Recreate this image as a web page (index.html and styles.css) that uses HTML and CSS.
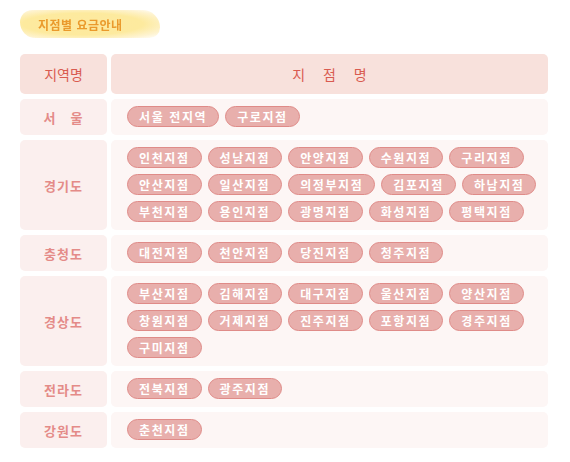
FILE: index.html
```html
<!DOCTYPE html>
<html lang="ko">

<head>
    <meta charset="UTF-8">
    <title>지점별 요금안내</title>
    <link rel="stylesheet" href="styles.css">
</head>

<body>
    <h1 class="page-title"><span>지점별 요금안내</span></h1>

    <div class="branch-table">
        <div class="head-cell area">지역명</div>
        <div class="head-cell name">지 점 명</div>

        <div class="area-cell">서 &nbsp; 울</div>
        <div class="branch-cell">
            <a class="pill">서울 전지역</a>
            <a class="pill">구로지점</a>
        </div>

        <div class="area-cell">경기도</div>
        <div class="branch-cell">
            <a class="pill">인천지점</a>
            <a class="pill">성남지점</a>
            <a class="pill">안양지점</a>
            <a class="pill">수원지점</a>
            <a class="pill">구리지점</a>
            <a class="pill">안산지점</a>
            <a class="pill">일산지점</a>
            <a class="pill">의정부지점</a>
            <a class="pill">김포지점</a>
            <a class="pill">하남지점</a>
            <a class="pill">부천지점</a>
            <a class="pill">용인지점</a>
            <a class="pill">광명지점</a>
            <a class="pill">화성지점</a>
            <a class="pill">평택지점</a>
        </div>

        <div class="area-cell">충청도</div>
        <div class="branch-cell">
            <a class="pill">대전지점</a>
            <a class="pill">천안지점</a>
            <a class="pill">당진지점</a>
            <a class="pill">청주지점</a>
        </div>

        <div class="area-cell">경상도</div>
        <div class="branch-cell">
            <a class="pill">부산지점</a>
            <a class="pill">김해지점</a>
            <a class="pill">대구지점</a>
            <a class="pill">울산지점</a>
            <a class="pill">양산지점</a>
            <a class="pill">창원지점</a>
            <a class="pill">거제지점</a>
            <a class="pill">진주지점</a>
            <a class="pill">포항지점</a>
            <a class="pill">경주지점</a>
            <a class="pill">구미지점</a>
        </div>

        <div class="area-cell">전라도</div>
        <div class="branch-cell">
            <a class="pill">전북지점</a>
            <a class="pill">광주지점</a>
        </div>

        <div class="area-cell">강원도</div>
        <div class="branch-cell">
            <a class="pill">춘천지점</a>
        </div>
    </div>
</body>

</html>
```

FILE: styles.css
```css
body {
    font-family: "Noto Sans CJK KR", "Noto Sans", sans-serif;
    margin: 0;
    padding: 10px 22px 0 20px;
    background-color: #fff;
}

.page-title {
    margin: 0 0 16px;
    width: 140px;
    height: 28px;
    display: flex;
    align-items: center;
    background: radial-gradient(ellipse at 45% 50%, #fde9a0 0%, #fdea9e 55%, #fef3cf 80%, rgba(255, 255, 255, 0) 100%);
    border-radius: 14px 20px 12px 18px;
    filter: blur(0.4px);
}

.page-title span {
    padding-left: 18px;
    font-size: 12px;
    font-weight: bold;
    color: #ea9a2c;
    letter-spacing: 0.5px;
}

.branch-table {
    display: grid;
    grid-template-columns: 87px 1fr;
    column-gap: 4px;
    row-gap: 5px;
}

.head-cell {
    height: 40px;
    background-color: #f8e1dc;
    border-radius: 5px;
    display: flex;
    align-items: center;
    justify-content: center;
    font-size: 14px;
    color: #d95b50;
}

.head-cell.name {
    letter-spacing: 7px;
    padding-left: 7px;
}

.area-cell {
    background-color: #fbefee;
    border-radius: 5px;
    display: flex;
    align-items: center;
    justify-content: center;
    font-size: 13px;
    font-weight: bold;
    letter-spacing: 1px;
    color: #e48b88;
}

.branch-cell {
    background-color: #fdf6f5;
    border-radius: 5px;
    padding: 7px 8px 8px 16px;
    display: flex;
    flex-wrap: wrap;
    align-content: flex-start;
    column-gap: 6px;
    row-gap: 6px;
}

.pill {
    height: 19px;
    padding: 0 11px;
    display: inline-flex;
    align-items: center;
    justify-content: center;
    background-color: #e8afac;
    border: 1px solid #df8b88;
    border-radius: 11px;
    color: #fff;
    font-size: 12px;
    font-weight: bold;
    letter-spacing: 1.6px;
    cursor: pointer;
}
```
